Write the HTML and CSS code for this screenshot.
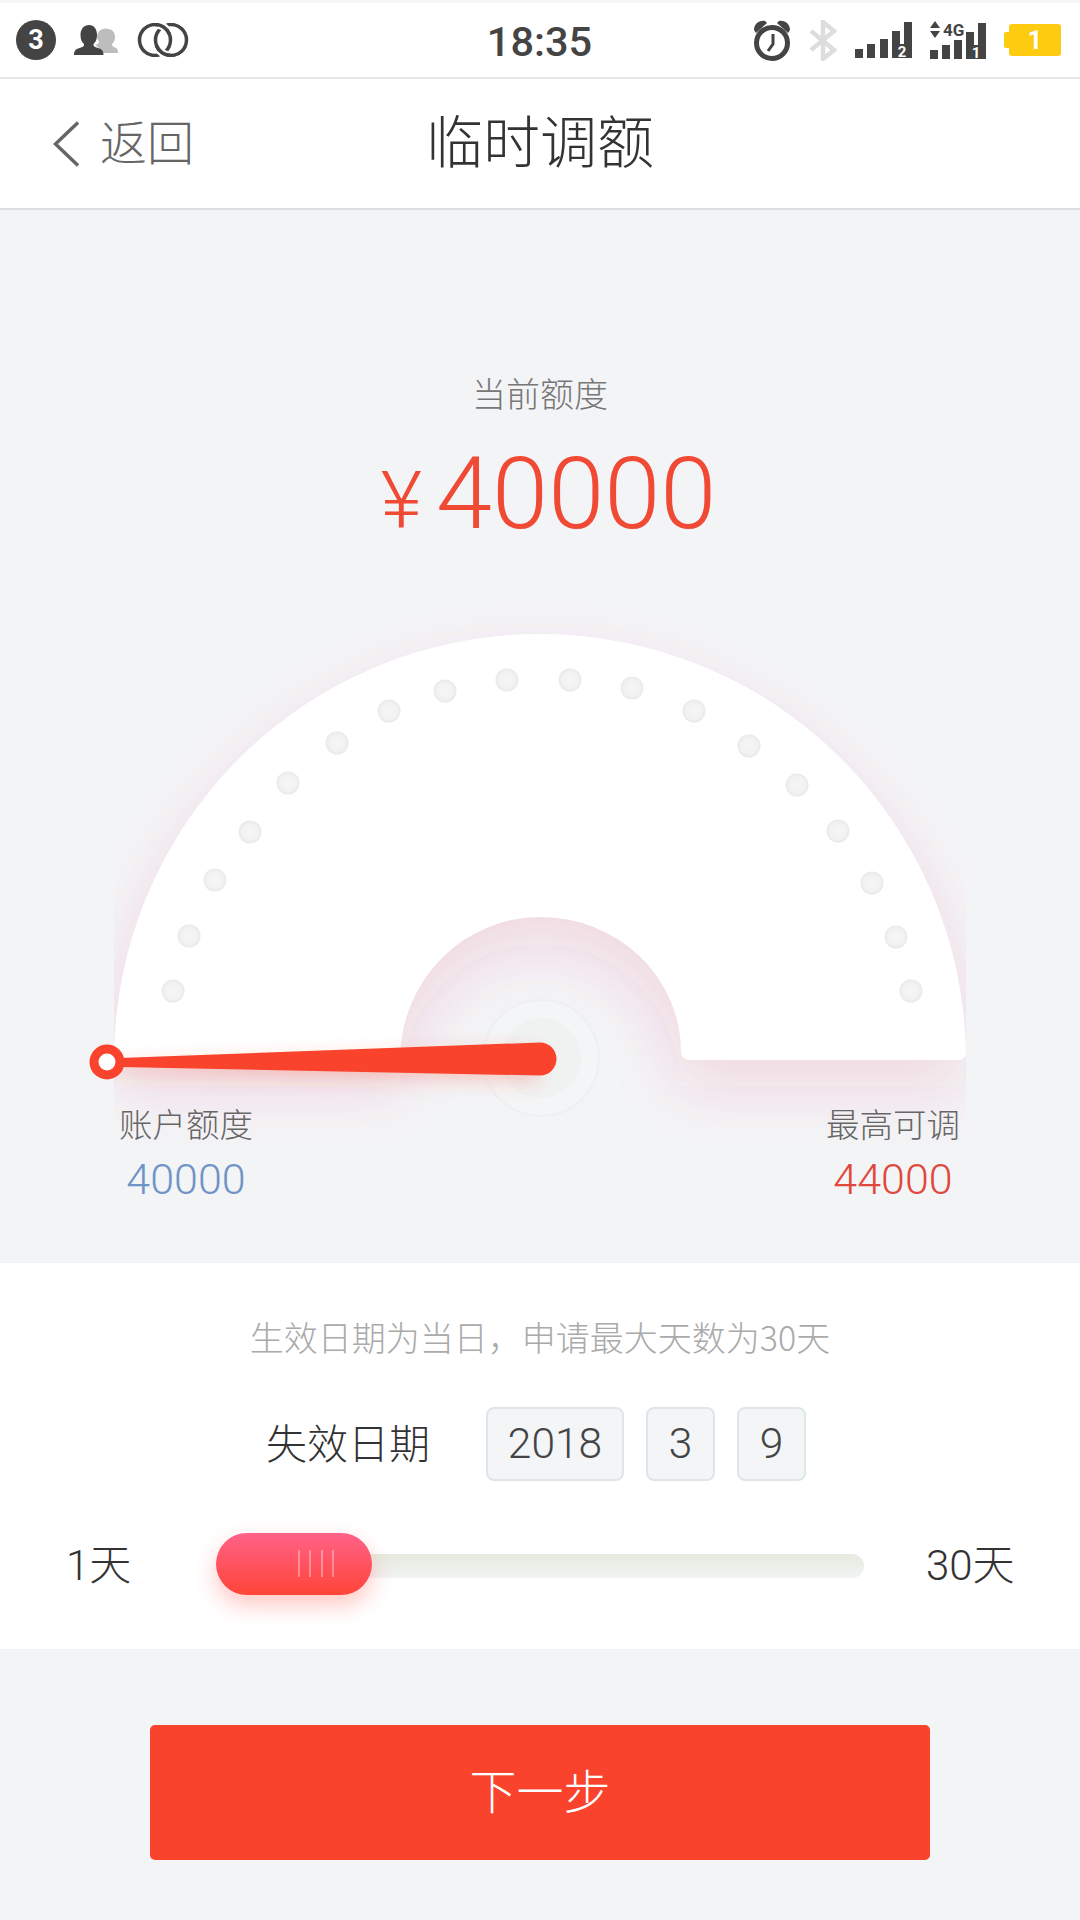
FILE: index.html
```html
<!DOCTYPE html>
<html>
	<head>
		<meta charset="UTF-8">
		<title>临时调额</title>
		<link rel="stylesheet" href="styles.css">
	</head>

	<body>
		<div class='status-bar'>
			<div class='status-group'>
				<span class='badge'>3</span>
				<svg width='44' height='30' viewBox='0 0 44 30'>
					<path fill='#bdbdbd' d='M34 4c4 0 7 3 7 8 0 3-1 5-3 7 0 2 1 3 3 3.500 2 .5 3 2 3 5.500H25c0-2 0-4-1-6l-3-2c2-1 3-1 4-3-1-2-2-3-2-5 0-5 4-8.500 9-8.500z'/>
					<path fill='#444' d='M15 0c5 0 8 4 8 10 0 4-1 7-3.500 9-.5 2 1 3 4.500 4 4 1 5.500 3 5.500 7H0c0-4 1.500-6 5.500-7 3.500-1 5-2 4.500-4C7.500 17 6.500 14 6.500 10 6.500 4 10 0 15 0z'/>
				</svg>
				<svg width='53' height='34' viewBox='0 0 53 34'>
					<g fill='none' stroke='#444' stroke-width='3.500'>
						<circle cx='19' cy='17' r='15.500'/>
						<circle cx='35' cy='17' r='15.500'/>
						<path stroke='#fff' stroke-width='8' d='M22.500 1.900A15.500 15.500 0 0 1 31 7'/>
						<path d='M19 1.500A15.500 15.500 0 0 1 33.600 11.700'/>
						<path stroke='#fff' stroke-width='8' d='M31 32A15.500 15.500 0 0 1 23 27'/>
						<path d='M35 32.500A15.500 15.500 0 0 1 20.400 22.300'/>
					</g>
				</svg>
			</div>
			<div class='clock'>18:35</div>
			<div class='status-group right'>
				<svg width='38' height='41' viewBox='0 0 38 41'>
					<circle cx='19' cy='23' r='15.500' fill='none' stroke='#444' stroke-width='5'/>
					<path d='M20 14v10l-5 7' fill='none' stroke='#444' stroke-width='3'/>
					<path fill='#444' d='M1 10c0-6 5-10 11-9l2 2L3 13zM37 10c0-6-5-10-11-9l-2 2 11 10z'/>
				</svg>
				<svg width='28' height='41' viewBox='0 0 28 41'>
					<path d='M2 11l23 19-11 9V2l11 9L2 30' fill='none' stroke='#ddd' stroke-width='4.500'/>
				</svg>
				<svg class='signal' width='57' height='36' viewBox='0 0 57 36'>
					<g fill='#444'>
						<rect x='0' y='27' width='8' height='9'/>
						<rect x='12' y='22' width='8' height='14'/>
						<rect x='25' y='17' width='8' height='19'/>
						<rect x='37' y='9' width='8' height='27'/>
						<rect x='49' y='0' width='8' height='36'/>
						<rect x='37' y='22' width='20' height='14'/>
					</g>
					<text class='sim-no' x='47' y='34.500'>2</text>
				</svg>
				<svg class='signal' width='56' height='38' viewBox='0 0 56 38'>
					<g fill='#444'>
						<rect x='0' y='29' width='8' height='9'/>
						<rect x='12' y='24' width='8' height='14'/>
						<rect x='24' y='19' width='8' height='19'/>
						<rect x='36' y='11' width='8' height='27'/>
						<rect x='48' y='2' width='8' height='36'/>
						<rect x='36' y='24' width='20' height='14'/>
						<path d='M5 0l5 7H0zM5 17l5-7H0z'/>
					</g>
					<text class='net' x='13' y='15'>4G</text>
					<text class='sim-no' x='46' y='36.500'>1</text>
				</svg>
				<div class='battery'>1</div>
			</div>
		</div>

		<div class='nav-bar'>
			<div class='back'>
				<svg width='26' height='46' viewBox='0 0 26 46'>
					<path d='M25 1.500L2.500 23 25 44.500' fill='none' stroke='#666' stroke-width='3.500'/>
				</svg>
				<span class='back-text'>返回</span>
			</div>
			<div class='title'>临时调额</div>
		</div>

		<div class='quota'>
			<div class='quota-label'>当前额度</div>
			<div class='quota-amount'><span class='yen'>¥</span>40000</div>
			<div class='gauge'>
				<svg class='dial' width='1080' height='663' viewBox='0 600 1080 663'>
					<defs>
						<filter id='glow' filterUnits='userSpaceOnUse' x='0' y='500' width='1080' height='800'>
							<feGaussianBlur stdDeviation='30'/>
						</filter>
						<filter id='needle-glow' filterUnits='userSpaceOnUse' x='60' y='1000' width='560' height='140'>
							<feGaussianBlur stdDeviation='9'/>
						</filter>
						<clipPath id='dial-clip'>
							<rect x='114' y='600' width='852' height='663'/>
						</clipPath>
						<radialGradient id='dot'>
							<stop offset='0' stop-color='#f6f6f6'/>
							<stop offset='0.7' stop-color='#f2f2f2'/>
							<stop offset='1' stop-color='#e9e9e9'/>
						</radialGradient>
					</defs>

					<g clip-path='url(#dial-clip)'>
						<path filter='url(#glow)' transform='translate(0 26)' fill='#e63c5a' fill-opacity='0.14' d='M114 1060A426 426 0 0 1 966 1060H680A140 143 0 0 0 400 1060Z'/>
					</g>
					<path fill='#fff' d='M114 1060A426 426 0 0 1 540 634A426 426 0 0 1 966 1052Q966 1060 958 1060H690Q682 1060 681 1052A140.500 135 0 0 0 540 917A140 143 0 0 0 400 1060Z'/>

					<circle cx='541' cy='1058' r='58' fill='#f4f5f6' stroke='#eeeff1' stroke-width='2'/>
					<circle cx='541' cy='1058' r='40' fill='#f0f2f2'/>

					<g fill='url(#dot)'>
						<circle cx='173' cy='991' r='11.500'/>
						<circle cx='189' cy='936' r='11.500'/>
						<circle cx='215' cy='880' r='11.500'/>
						<circle cx='250' cy='832' r='11.500'/>
						<circle cx='288' cy='783' r='11.500'/>
						<circle cx='337' cy='743' r='11.500'/>
						<circle cx='389' cy='711' r='11.500'/>
						<circle cx='445' cy='691' r='11.500'/>
						<circle cx='507' cy='680' r='11.500'/>
						<circle cx='570' cy='680' r='11.500'/>
						<circle cx='632' cy='688' r='11.500'/>
						<circle cx='694' cy='711' r='11.500'/>
						<circle cx='749' cy='746' r='11.500'/>
						<circle cx='797' cy='785' r='11.500'/>
						<circle cx='838' cy='831' r='11.500'/>
						<circle cx='872' cy='883' r='11.500'/>
						<circle cx='896' cy='937' r='11.500'/>
						<circle cx='911' cy='991' r='11.500'/>
					</g>

					<path filter='url(#needle-glow)' transform='translate(0 6)' fill='#f9432c' fill-opacity='0.25' d='M118 1058L538 1043V1076L118 1067Z'/>
					<path fill='#f9432c' d='M120 1058L540 1042.500A16.500 16.500 0 0 1 540 1075.500L120 1067Z'/>
					<circle cx='107' cy='1062' r='13' fill='#fff' stroke='#f9432c' stroke-width='9'/>
				</svg>
				<div class='limits'>
					<div class='limit'>
						<div class='limit-label'>账户额度</div>
						<div class='limit-value blue'>40000</div>
					</div>
					<div class='limit'>
						<div class='limit-label'>最高可调</div>
						<div class='limit-value red'>44000</div>
					</div>
				</div>
			</div>
		</div>

		<div class='expiry'>
			<div class='tip'>生效日期为当日，申请最大天数为30天</div>
			<div class='date-row'>
				<div class='date-label'>失效日期</div>
				<div class='date-box year'>2018</div>
				<div class='date-box'>3</div>
				<div class='date-box'>9</div>
			</div>
			<div class='slider-row'>
				<div class='slider-min'>1天</div>
				<div class='track'>
					<div class='thumb'>
						<i></i><i></i><i></i><i></i>
					</div>
				</div>
				<div class='slider-max'>30天</div>
			</div>
		</div>

		<div class='footer'>
			<button class='next'>下一步</button>
		</div>
	</body>
</html>
```

FILE: styles.css
```css
body {
	margin: 0;
	width: 1080px;
	height: 1920px;
	overflow: hidden;
	background-color: #F3F4F6;
	font-family: "Noto Sans CJK SC", Roboto, sans-serif;
}

svg {
	display: block;
}

svg.signal {
	overflow: visible;
}

/* status bar */
.status-bar {
	display: grid;
	grid-template-columns: 1fr auto 1fr;
	align-items: center;
	box-sizing: border-box;
	height: 79px;
	padding: 0 19px 0 16px;
	background-color: #FFF;
	border-top: 3px solid #F6F6F6;
	border-bottom: 2px solid #E6E6E6;
}

.status-group {
	display: flex;
	align-items: center;
	gap: 18px;
}
.status-group.right {
	justify-content: flex-end;
}

.badge {
	display: flex;
	align-items: center;
	justify-content: center;
	width: 40px;
	height: 40px;
	border-radius: 20px;
	background-color: #444;
	color: #FFF;
	font: 700 27px Roboto, sans-serif;
}

.clock {
	padding-top: 2px;
	padding-left: 2px;
	font: 500 41.5px Roboto, sans-serif;
	color: #444;
}

.sim-no {
	font: 700 15px Roboto, sans-serif;
	fill: #FFF;
	text-anchor: middle;
}

.net {
	font: 700 17px Roboto, sans-serif;
	fill: #444;
}

.battery {
	position: relative;
	display: flex;
	align-items: center;
	justify-content: center;
	box-sizing: border-box;
	width: 52px;
	height: 32px;
	margin-left: 5px;
	border-radius: 3px;
	background-color: #FDCB10;
	color: #FFF;
	font: 700 26px Roboto, sans-serif;
}
.battery::before {
	content: '';
	position: absolute;
	left: -5px;
	top: 8px;
	width: 5px;
	height: 16px;
	border-radius: 2px 0 0 2px;
	background-color: #FDCB10;
}

/* nav */
.nav-bar {
	display: grid;
	grid-template-columns: 1fr auto 1fr;
	align-items: center;
	box-sizing: border-box;
	height: 131px;
	background-color: #FFF;
	border-bottom: 2px solid #DEDFE0;
}

.back {
	display: flex;
	align-items: center;
	gap: 21px;
	padding-left: 53px;
	font-size: 47px;
	font-weight: 300;
	color: #666;
}

.back-text {
	padding-bottom: 8px;
}

.title {
	padding-bottom: 12px;
	font-size: 57px;
	font-weight: 300;
	color: #333;
}

/* current quota */
.quota {
	height: 1053px;
	padding-top: 160px;
	box-sizing: border-box;
	text-align: center;
}

.quota-label {
	font-size: 34px;
	font-weight: 300;
	line-height: 46px;
	color: #777;
}

.quota-amount {
	margin-top: 23px;
	padding-left: 17px;
	font: 300 101px/110px Roboto, sans-serif;
	color: #F04A35;
}

.yen {
	margin-right: 14px;
	font-size: 80px;
	line-height: 0;
}

.gauge {
	display: grid;
	margin-top: 51px;
}

.dial, .limits {
	grid-area: 1 / 1;
}

.limits {
	display: flex;
	justify-content: space-between;
	align-self: end;
	padding: 0 120px 59px 119px;
}

.limit-label {
	font-size: 33.500px;
	font-weight: 300;
	line-height: 46px;
	color: #666;
}

.limit-value {
	margin-top: 8px;
	font: 300 43px/50px Roboto, sans-serif;
}
.limit-value.blue { color: #6F93C6 }
.limit-value.red { color: #E0483C }

/* expiry date */
.expiry {
	box-sizing: border-box;
	height: 386px;
	padding-top: 51px;
	background-color: #FFF;
}

.tip {
	font-size: 34px;
	font-weight: 300;
	line-height: 46px;
	text-align: center;
	color: #AAA;
}

.date-row {
	display: flex;
	align-items: center;
	gap: 22px;
	margin-top: 47px;
	padding-left: 266px;
}

.date-label {
	width: 165px;
	margin-right: 33px;
	padding-bottom: 6px;
	font-size: 41px;
	font-weight: 300;
	color: #333;
	white-space: nowrap;
}

.date-box {
	box-sizing: border-box;
	width: 69px;
	height: 74px;
	border: 2px solid #DFE6E9;
	border-radius: 8px;
	background-color: #F3F5F7;
	font: 300 42.500px/70px Roboto, sans-serif;
	text-align: center;
	color: #444;
}
.date-box.year {
	width: 138px;
}

.slider-row {
	display: flex;
	align-items: center;
	margin-top: 55px;
	padding-left: 66px;
}

.slider-min, .slider-max {
	margin-top: -5px;
	padding-bottom: 3px;
	font-size: 42px;
	font-weight: 300;
	color: #333;
	font-family: Roboto, "Noto Sans CJK SC", sans-serif;
}

.slider-min {
	width: 150px;
}

.slider-max {
	margin-left: 62px;
}

.track {
	display: flex;
	align-items: center;
	width: 648px;
	height: 24px;
	border-radius: 12px;
	background: linear-gradient(#E6EADF, #F1F3F3);
}

.thumb {
	display: flex;
	justify-content: flex-end;
	align-items: center;
	gap: 9.500px;
	box-sizing: border-box;
	flex: none;
	width: 156px;
	height: 62px;
	margin-top: -4px;
	padding-right: 38px;
	border-radius: 31px;
	background: linear-gradient(#FF6288, #FF4438);
	box-shadow: 0 10px 22px rgba(255, 70, 60, 0.3);
}
.thumb i {
	width: 2px;
	height: 27px;
	background-color: rgba(255, 255, 255, 0.35);
}

/* next */
.footer {
	display: flex;
	justify-content: center;
	padding-top: 76px;
}

button.next {
	width: 780px;
	height: 135px;
	padding-bottom: 10px;
	border: none;
	border-radius: 5px;
	background-color: #F9432C;
	color: #FFF;
	font-family: inherit;
	font-size: 47px;
	font-weight: 300;
}
```
